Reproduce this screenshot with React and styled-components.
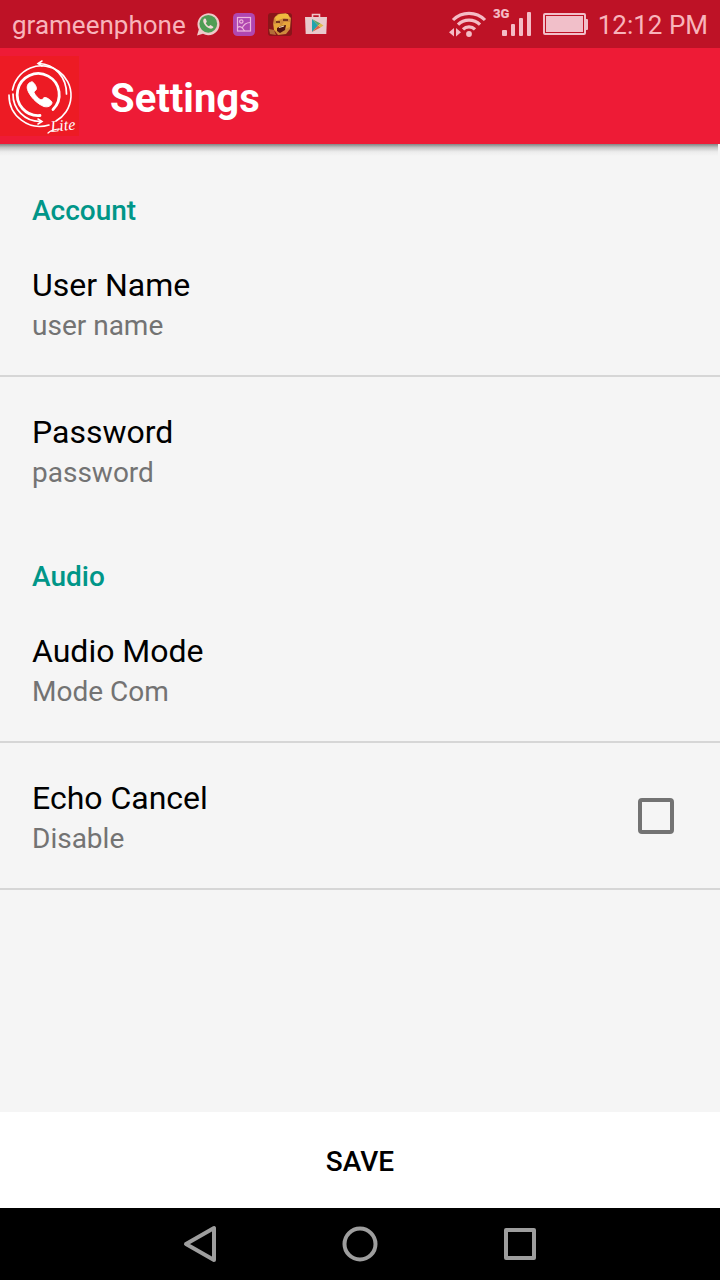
import React, { useState } from 'react';
import styled, { createGlobalStyle } from 'styled-components';

const GlobalStyle = createGlobalStyle`
  * {
    box-sizing: border-box;
  }

  body {
    margin: 0;
    background: #f5f5f5;
    font-family: Roboto, sans-serif;
  }

  button {
    border: none;
    margin: 0;
    font-family: inherit;
    cursor: pointer;
  }
`;

// Whole screen, bars at the ends and the list between them
const Screen = styled.div`
  display: flex;
  flex-direction: column;
  min-height: 100vh;
`;

// Android status bar
const StatusBar = styled.div`
  display: flex;
  justify-content: space-between;
  align-items: center;
  height: 48px;
  padding: 0 12px;
  background: #be1226;
  color: #f8b4bb;
`;

const StatusGroup = styled.div`
  display: flex;
  align-items: center;
  gap: ${(props) => props.$gap}px;
`;

const StatusText = styled.span`
  font-size: 26px;
  line-height: 48px;
  padding-top: 2px;
  white-space: nowrap;
`;

// Red app bar with the logo and the page title
const AppBar = styled.header`
  display: flex;
  align-items: center;
  gap: 30px;
  height: 96px;
  background: #ee1b36;
`;

const Title = styled.h1`
  margin: 0;
  padding-top: 6px;
  color: #fff;
  font-size: 40px;
  line-height: 48px;
  font-weight: 700;
`;

// Shadow that the app bar drops on the list
const BarShadow = styled.div`
  height: 12px;
  margin-right: 2px;
  background: linear-gradient(#848484, #c4c4c4 30%, #ececec 65%, #f5f5f5);
`;

const List = styled.main`
  flex: 1;
`;

const SectionTitle = styled.h2`
  margin: 0;
  padding: 35px 32px 0;
  height: 74px;
  color: #009688;
  font-size: 28px;
  line-height: 40px;
  font-weight: 500;
`;

const Row = styled.div`
  display: flex;
  align-items: center;
  justify-content: space-between;
  width: 100%;
  padding: 0 46px 0 32px;
  background: none;
  text-align: left;
`;

const Divider = styled.hr`
  height: 2px;
  margin: 0;
  border: none;
  background: #d6d6d6;
`;

const RowText = styled.span`
  display: flex;
  flex-direction: column;
  padding: 35px 0 28px;
`;

const RowTitle = styled.span`
  color: #000;
  font-size: 32px;
  line-height: 40px;
`;

const RowValue = styled.span`
  color: #737373;
  font-size: 28px;
  line-height: 42px;
`;

const Checkbox = styled.input`
  appearance: none;
  width: 36px;
  height: 36px;
  margin: 0;
  border: 4px solid #737373;
  border-radius: 4px;
  cursor: pointer;

  &:checked {
    border-color: #009688;
    background: #009688;
  }
`;

const SaveButton = styled.button`
  height: 96px;
  padding-top: 4px;
  background: #fff;
  color: #000;
  font-size: 28px;
  font-weight: 500;
`;

// Android navigation bar
const NavBar = styled.nav`
  display: flex;
  justify-content: center;
  gap: 88px;
  height: 72px;
  background: #000;
`;

const NavButton = styled.button`
  display: flex;
  align-items: center;
  justify-content: center;
  width: 72px;
  padding: 0;
  background: none;
`;

const Logo = () => (
  <svg width="80" height="80" viewBox="0 0 80 80" fill="none" stroke="#fff" strokeLinecap="round">
    <rect width="79" height="80" fill="#ed1b24" stroke="none" />
    <path d="M39 7.500A28 30 0 0 1 66.500 38" strokeWidth="1.700" />
    <path d="M42 5l-4 2.500 4 2.500" strokeWidth="1.500" />
    <path d="M12.500 34A29.500 29.500 0 1 1 56 65" strokeWidth="1.600" />
    <path d="M9 39A31 31 0 0 0 49 69" strokeWidth="1.600" />
    <path d="M13 38A27 27 0 0 0 40 65.500" strokeWidth="1.700" />
    <path d="M38 63l4 2.500-4 2.500" strokeWidth="1.500" />
    <path d="M40 59.500A21 21 0 1 1 53 53.500" strokeWidth="2.800" />
    <path d="M32 26c-4 0-5.500 4-4.500 7.500C29.500 40 37 48 44 50.500c4 1 7-.5 8-3.500.5-2-5-5.500-7-5.500s-2.500 2.500-4 2.500c-2.500-1-6-5-7-7.500 0-1.500 2.500-2 2.500-4S34 26 32 26z" fill="#fff" strokeWidth="1" />
    <path d="M48 77c3-3 8-4 13-4" strokeWidth="1.200" />
    <text
      x="51"
      y="76"
      fill="#fff"
      stroke="none"
      fontFamily="'Liberation Serif', serif"
      fontSize="16"
      fontStyle="italic"
      transform="rotate(-6 51 76)"
    >
      Lite
    </text>
  </svg>
);

const ChatIcon = () => (
  <svg width="24" height="24" viewBox="0 0 24 24">
    <path d="M1 23.500l1.800-6A11 11 0 1 1 7 21.800z" fill="#efc9c9" />
    <circle cx="12.300" cy="11.800" r="8.900" fill="#4f9d55" />
    <path d="M8.500 6.500c-3 2 0 6.500 2.500 8.500s5.500 2.500 6.500 0l-3-2-1.700 1.200c-1.500-.7-2.500-2-3-3l1-1.500-1-3z" fill="#f4dada" />
  </svg>
);

const GalleryIcon = () => (
  <svg width="24" height="24" viewBox="0 0 24 24" fill="none" stroke="#eeb6dc" strokeWidth="1.200">
    <rect x="1" y="1" width="22" height="23" rx="4.500" fill="#b047b0" stroke="none" />
    <rect x="5.500" y="5.500" width="13" height="13.500" />
    <circle cx="9.300" cy="9.500" r="1.700" />
    <path d="M5.500 15.500c3-2 5 0 7 3.500M10 16.500c1.500-4 4-6 8.500-6" />
  </svg>
);

const GameIcon = () => (
  <svg width="24" height="24" viewBox="0 0 24 24">
    <rect y="1" width="24" height="23" rx="3" fill="#8a1519" />
    <path d="M6 6l4-4 8-1 5 5-1 11-4 5-8 1-4-5-1-6z" fill="#cf8a3c" />
    <path d="M7 5l5-3 8 0 2 5-6-1-8 3z" fill="#f0b93f" />
    <path d="M6 12l5-1 2 3 3-4 6 0 0 5-5 2-7 3-4-2z" fill="#e6a53a" />
    <path d="M8 10l4 0M15 8l5 0" stroke="#5b1714" strokeWidth="1.500" />
    <path d="M9 16l4-2 5-1-1 5-5 3-3-2z" fill="#501011" />
    <path d="M11 15.500l5-1.500" stroke="#f2d9b0" strokeWidth="1.200" />
    <path d="M1 17l5 1 2 5-6-1z" fill="#b36c38" />
  </svg>
);

const StoreIcon = () => (
  <svg width="24" height="24" viewBox="0 0 24 24">
    <path d="M8.500 5V2.500h7V5" fill="none" stroke="#eec4c8" strokeWidth="1.600" />
    <path d="M1 5h22l-.7 17H1.700z" fill="#e9c9cc" />
    <path d="M8 7v13l6-6.500z" fill="#21a3ad" />
    <path d="M8 7l6 6.500 2.500-2z" fill="#59a86b" />
    <path d="M14 13.500L8 20l8.500-4.500z" fill="#d96345" />
    <path d="M14 13.500l2.500-2 3 2-3 2z" fill="#dfb94b" />
  </svg>
);

const WifiIcon = () => (
  <svg width="40" height="28" viewBox="0 0 40 28" fill="none" stroke="#f4bcc5" strokeWidth="3.200">
    <path d="M4 10a22.500 22.500 0 0 1 32 0M9 14.700a15.500 15.500 0 0 1 22 0M14 19.400a8.500 8.500 0 0 1 12 0" />
    <circle cx="20" cy="24" r="2.900" fill="#f4bcc5" stroke="none" />
    <path d="M5 18v8.500L0 22.200zM7 18v8.500l5-4.300z" fill="#f4bcc5" stroke="none" />
  </svg>
);

const SignalIcon = () => (
  <svg width="46" height="40" viewBox="0 0 46 40" fill="#f4bcc5">
    <text x="0" y="14" fontFamily="Roboto, sans-serif" fontSize="13" fontWeight="900">3G</text>
    <rect x="9" y="26" width="5" height="6" rx="1" />
    <rect x="18" y="20" width="4" height="12" rx="1" />
    <rect x="26" y="14" width="4" height="18" rx="1" />
    <rect x="34" y="8" width="4" height="24" rx="1" />
  </svg>
);

const BatteryIcon = () => (
  <svg width="51" height="24" viewBox="0 0 51 24" fill="#f1bfc9">
    <rect x="1" y="2" width="41" height="20" rx="1" fill="none" stroke="#f1bfc9" strokeWidth="2" />
    <rect x="3" y="4" width="37" height="16" />
    <rect x="42" y="7" width="3" height="11" rx="1" />
  </svg>
);

const App = () => {
  // State of the echo cancel box
  const [echo, setEcho] = useState(false);

  return (
    <Screen>
      <GlobalStyle />
      <StatusBar>
        <StatusGroup $gap={10}>
          <StatusText>grameenphone</StatusText>
          <StatusGroup $gap={12}>
            <ChatIcon />
            <GalleryIcon />
            <GameIcon />
            <StoreIcon />
          </StatusGroup>
        </StatusGroup>
        <StatusGroup $gap={4}>
          <WifiIcon />
          <SignalIcon />
          <BatteryIcon />
          <StatusText>12:12 PM</StatusText>
        </StatusGroup>
      </StatusBar>

      <AppBar>
        <Logo />
        <Title>Settings</Title>
      </AppBar>
      <BarShadow />

      <List>
        {/* Account settings */}
        <SectionTitle>Account</SectionTitle>
        <Row as="button">
          <RowText>
            <RowTitle>User Name</RowTitle>
            <RowValue>user name</RowValue>
          </RowText>
        </Row>
        <Divider />
        <Row as="button">
          <RowText>
            <RowTitle>Password</RowTitle>
            <RowValue>password</RowValue>
          </RowText>
        </Row>

        {/* Audio settings */}
        <SectionTitle>Audio</SectionTitle>
        <Row as="button">
          <RowText>
            <RowTitle>Audio Mode</RowTitle>
            <RowValue>Mode Com</RowValue>
          </RowText>
        </Row>
        <Divider />
        <Row as="label" htmlFor="echo">
          <RowText>
            <RowTitle>Echo Cancel</RowTitle>
            <RowValue>{echo ? 'Enable' : 'Disable'}</RowValue>
          </RowText>
          <Checkbox id="echo" type="checkbox" checked={echo} onChange={(e) => setEcho(e.target.checked)} />
        </Row>
        <Divider />
      </List>

      <SaveButton>SAVE</SaveButton>

      <NavBar>
        <NavButton aria-label="Back">
          <svg width="36" height="40" viewBox="0 0 36 40" fill="none" stroke="#9e9e9e" strokeWidth="4" strokeLinejoin="round">
            <path d="M32 4v32L4 20z" />
          </svg>
        </NavButton>
        <NavButton aria-label="Home">
          <svg width="36" height="36" viewBox="0 0 36 36" fill="none" stroke="#9e9e9e" strokeWidth="4">
            <circle cx="18" cy="18" r="15.500" />
          </svg>
        </NavButton>
        <NavButton aria-label="Recent apps">
          <svg width="36" height="36" viewBox="0 0 36 36" fill="none" stroke="#9e9e9e" strokeWidth="4" strokeLinejoin="round">
            <rect x="4" y="4" width="28" height="28" />
          </svg>
        </NavButton>
      </NavBar>
    </Screen>
  );
};

export default App;
